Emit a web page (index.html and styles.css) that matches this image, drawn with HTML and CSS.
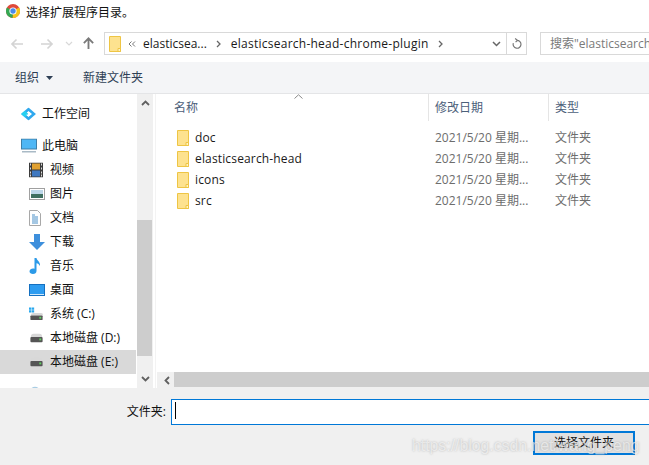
FILE: index.html
```html
<!DOCTYPE html>
<html lang="zh">
<head>
<meta charset="utf-8">
<title>选择扩展程序目录。</title>
<link rel="stylesheet" href="styles.css">
</head>
<body>
<div class="dialog">
  <header class="titlebar">
    <svg class="chrome" viewBox="0 0 14 14" width="14" height="14">
      <circle cx="7" cy="7" r="7" fill="#e0493a"/>
      <path d="M7 7 L13.1 3.6 A7 7 0 0 1 6.5 14 Z" fill="#f5c518"/>
      <path d="M7 7 L6.5 14 A7 7 0 0 1 1 3.4 Z" fill="#34a853"/>
      <circle cx="7" cy="7" r="3.6" fill="#fff"/>
      <circle cx="7" cy="7" r="2.7" fill="#4a8be8"/>
    </svg>
    <span class="title-text">选择扩展程序目录。</span>
  </header>

  <div class="navbar">
    <svg class="nav-ico back" viewBox="0 0 14 12" width="14" height="12"><path d="M13 6H2M6.500 1.500L2 6l4.500 4.500" fill="none" stroke="#d4d4d4" stroke-width="1.700"/></svg>
    <svg class="nav-ico fwd" viewBox="0 0 14 12" width="14" height="12"><path d="M1 6h11M7.500 1.500L12 6l-4.500 4.500" fill="none" stroke="#d4d4d4" stroke-width="1.700"/></svg>
    <svg class="nav-ico drop" viewBox="0 0 8 5" width="8" height="5"><path d="M1 1l3 3 3-3" fill="none" stroke="#d8d8d8" stroke-width="1.200"/></svg>
    <svg class="nav-ico up" viewBox="0 0 14 14" width="13" height="13"><path d="M7 13V2M2 6.500L7 1.500l5 5" fill="none" stroke="#7a7a7a" stroke-width="2"/></svg>
    <div class="address">
      <svg class="folder addr-folder" viewBox="0 0 12 16" width="12" height="16"><use href="#folder-shape"/></svg>
      <svg class="chev-l" viewBox="0 0 8 6" width="8" height="6"><path d="M3.500 .5L1 3l2.500 2.500M7 .5L4.500 3 7 5.500" fill="none" stroke="#777" stroke-width="1"/></svg>
      <span class="crumb">elasticsea...</span>
      <svg class="chev-r" viewBox="0 0 5 8" width="5" height="8"><path d="M1 1l3 3-3 3" fill="none" stroke="#666" stroke-width="1.300"/></svg>
      <span class="crumb crumb-long">elasticsearch-head-chrome-plugin</span>
      <svg class="chev-r" viewBox="0 0 5 8" width="5" height="8"><path d="M1 1l3 3-3 3" fill="none" stroke="#666" stroke-width="1.300"/></svg>
      <span class="grow"></span>
      <svg class="addr-drop" viewBox="0 0 9 6" width="9" height="6"><path d="M1 1l3.500 3.500L8 1" fill="none" stroke="#666" stroke-width="1.500"/></svg>
      <span class="refresh">
        <svg viewBox="0 0 12 13" width="11" height="12"><path d="M6.500 2.500A4.300 4.300 0 1 1 2.500 5.500M4.500 .5l2.500 2-2 2" fill="none" stroke="#777" stroke-width="1.300"/></svg>
      </span>
    </div>
    <div class="search">搜索"elasticsearch-head-chrome-plugin"</div>
  </div>

  <div class="toolbar">
    <span class="tool">组织</span>
    <svg class="caret" viewBox="0 0 7 4" width="7" height="4"><path d="M0 0h7L3.500 4z" fill="#2e3f55"/></svg>
    <span class="tool new-folder">新建文件夹</span>
  </div>

  <main class="main">
    <nav class="sidebar">
      <div class="tree-item top gap-after">
        <svg class="ico" viewBox="0 0 16 14" width="15" height="13"><path d="M8 0l8 7-8 7-8-7z" fill="#2fa8ee"/><path d="M8 4l3.500 3L8 10 4.500 7z" fill="#fff"/><path d="M0 7l4-3.500L8 7l-4 3.500z" fill="#27d0f0"/><path d="M5 7.500L8 10l3.500-3L8 4 6.500 5.300 8 6.700 6.500 8z" fill="#fff"/></svg>
        <span>工作空间</span>
      </div>
      <div class="tree-item top">
        <svg class="ico" viewBox="0 0 16 15" width="16" height="15"><rect x="0.500" y="0.500" width="15" height="10" fill="#4fb7f5" stroke="#3f7fa8"/><rect x="1" y="12.500" width="14" height="1.500" fill="#a9bac6"/></svg>
        <span>此电脑</span>
      </div>
      <div class="tree-item">
        <svg class="ico" viewBox="0 0 14 15" width="14" height="15"><rect width="14" height="15" fill="#3b3b3b"/><rect x="3" y="1" width="8" height="6" fill="#e0a030"/><rect x="3" y="8" width="8" height="6" fill="#3f78c0"/><path d="M1 1h1v2H1zM1 5h1v2H1zM1 9h1v2H1zM1 12h1v2H1zM12 1h1v2h-1zM12 5h1v2h-1zM12 9h1v2h-1zM12 12h1v2h-1z" fill="#ddd"/></svg>
        <span>视频</span>
      </div>
      <div class="tree-item">
        <svg class="ico" viewBox="0 0 16 12" width="16" height="12"><rect x="0.500" y="0.500" width="15" height="11" fill="#fff" stroke="#a0a0a0"/><rect x="2" y="2" width="12" height="4" fill="#bcd6e8"/><rect x="2" y="6" width="12" height="4" fill="#3f6f60"/></svg>
        <span>图片</span>
      </div>
      <div class="tree-item">
        <svg class="ico" viewBox="0 0 12 16" width="12" height="16"><path d="M.5.500h8l3 3v12H.5z" fill="#fff" stroke="#a8a8a8"/><path d="M3 5h3M3 7h6M3 9h6M3 11h6M3 13h6" stroke="#4a90c8"/></svg>
        <span>文档</span>
      </div>
      <div class="tree-item">
        <svg class="ico" viewBox="0 0 16 16" width="16" height="16"><path d="M5 0h6v8h5l-8 8-8-8h5z" fill="#3d8fdc"/></svg>
        <span>下载</span>
      </div>
      <div class="tree-item">
        <svg class="ico" viewBox="0 0 12 16" width="12" height="16"><path d="M5.500 0h2c.3 2.500 4 3.500 3.500 8-1-1.800-2-2.500-3.500-2.800V13c0 1.800-1.500 3-3.500 3S.500 15 .500 13.300 2.300 10.500 4 10.500c.6 0 1.100.1 1.500.3z" fill="#2b9ae8"/></svg>
        <span>音乐</span>
      </div>
      <div class="tree-item">
        <svg class="ico" viewBox="0 0 16 12" width="16" height="12"><rect x="0.500" y="0.500" width="15" height="11" fill="#2e9cf0" stroke="#1570c0"/><rect x="1" y="10" width="14" height="1" fill="#cfe8fb"/></svg>
        <span>桌面</span>
      </div>
      <div class="tree-item">
        <svg class="ico" viewBox="0 0 16 14" width="15" height="14"><path d="M0 0h2.500v2.500H0zM3 0h2.500v2.500H3zM0 3h2.500v2.500H0zM3 3h2.500v2.500H3z" fill="#28a8ee"/><path d="M2 8.500Q2 6 5 6h8q2 0 2 2.500z" fill="#d8d8d8"/><rect x="1.500" y="8.500" width="13" height="5" rx="1" fill="#555"/><rect x="11" y="10" width="2" height="2" fill="#5fd35f"/></svg>
        <span>系统 (C:)</span>
      </div>
      <div class="tree-item">
        <svg class="ico" viewBox="0 0 16 10" width="15" height="10"><use href="#disk-shape"/></svg>
        <span>本地磁盘 (D:)</span>
      </div>
      <div class="tree-item selected">
        <svg class="ico" viewBox="0 0 16 10" width="15" height="10"><use href="#disk-shape"/></svg>
        <span>本地磁盘 (E:)</span>
      </div>
      <div class="tree-item net">
        <svg class="ico" viewBox="0 0 16 16" width="12" height="12"><circle cx="8" cy="8" r="7" fill="#a9cde4"/></svg>
      </div>
    </nav>

    <div class="vscroll">
      <svg class="arrow" viewBox="0 0 9 6" width="9" height="6"><path d="M1 5l3.500-3.500L8 5" fill="none" stroke="#606060" stroke-width="1.800"/></svg>
      <div class="vtrack"><div class="vthumb"></div></div>
      <svg class="arrow" viewBox="0 0 9 6" width="9" height="6"><path d="M1 1l3.500 3.500L8 1" fill="none" stroke="#606060" stroke-width="1.800"/></svg>
    </div>

    <section class="files">
      <div class="list-head">
        <svg class="sort" viewBox="0 0 9 5" width="9" height="5"><path d="M.5 4.500L4.500 .8l4 3.700" fill="none" stroke="#8a8a8a"/></svg>
        <div class="col col-name">名称</div>
        <div class="col col-date">修改日期</div>
        <div class="col col-type">类型</div>
      </div>
      <div class="rows">
        <div class="row"><div class="cell-name"><svg class="folder" viewBox="0 0 12 16" width="12" height="16"><use href="#folder-shape"/></svg><span>doc</span></div><div class="cell-date">2021/5/20 星期...</div><div class="cell-type">文件夹</div></div>
        <div class="row"><div class="cell-name"><svg class="folder" viewBox="0 0 12 16" width="12" height="16"><use href="#folder-shape"/></svg><span>elasticsearch-head</span></div><div class="cell-date">2021/5/20 星期...</div><div class="cell-type">文件夹</div></div>
        <div class="row"><div class="cell-name"><svg class="folder" viewBox="0 0 12 16" width="12" height="16"><use href="#folder-shape"/></svg><span>icons</span></div><div class="cell-date">2021/5/20 星期...</div><div class="cell-type">文件夹</div></div>
        <div class="row"><div class="cell-name"><svg class="folder" viewBox="0 0 12 16" width="12" height="16"><use href="#folder-shape"/></svg><span>src</span></div><div class="cell-date">2021/5/20 星期...</div><div class="cell-type">文件夹</div></div>
      </div>
      <div class="hscroll">
        <svg class="harrow" viewBox="0 0 6 9" width="6" height="9"><path d="M5 1L1.500 4.500 5 8" fill="none" stroke="#606060" stroke-width="1.800"/></svg>
        <div class="hthumb"></div>
      </div>
    </section>
  </main>

  <footer class="bottom">
    <div class="field">
      <label class="field-label">文件夹:</label>
      <div class="field-input"><span class="cursor"></span></div>
    </div>
    <div class="actions">
      <button class="primary">选择文件夹</button>
    </div>
  </footer>
  <div class="watermark">https://blog.csdn.net/wang_peng</div>
</div>

<svg class="defs" width="0" height="0">
  <defs>
    <g id="folder-shape">
      <path d="M.5.500h11v15H.5z" fill="#fde28f" stroke="#eec544"/>
      <path d="M9 15.500v-3h2.500v3z" fill="#fff3c4" stroke="#eec544"/>
    </g>
    <g id="disk-shape">
      <path d="M2 4Q2 .5 5 .5h6Q14 .5 14 4z" fill="#d8d8d8"/>
      <rect x="1.500" y="4" width="13" height="5.500" rx="1" fill="#555"/>
      <rect x="11" y="5.500" width="2" height="2" fill="#5fd35f"/>
    </g>
  </defs>
</svg>
</body>
</html>
```
FILE: styles.css
```css
* { box-sizing: border-box; }
html, body { margin: 0; padding: 0; }
body {
  width: 649px;
  height: 465px;
  overflow: hidden;
  background: #fff;
  font: 12px/16px "Open Sans", "Noto Sans CJK SC", sans-serif;
  color: #1a1a1a;
}
.defs { position: absolute; }
.dialog { position: relative; width: 649px; height: 465px; display: flex; flex-direction: column; overflow: hidden; }

.titlebar { height: 32px; flex: none; display: flex; align-items: flex-start; padding: 4px 0 0 6px; gap: 6px; color: #111; }
.chrome { flex: none; }
.title-text { margin-top: 1px; }

.navbar { height: 30px; flex: none; display: flex; align-items: flex-start; position: relative; }
.nav-ico { flex: none; }
.back { margin: 6px 0 0 10px; }
.fwd { margin: 6px 0 0 16px; }
.drop { margin: 9px 0 0 11px; }
.up { margin: 5px 0 0 9px; }
.address {
  flex: none;
  width: 423px; height: 23px;
  margin-left: 9px;
  border: 1px solid #d9d9d9;
  display: flex; align-items: center;
  padding-left: 4px;
  color: #1a1a1a;
  white-space: nowrap;
}
.addr-folder { margin-right: 7px; }
.chev-l { margin-right: 7px; }
.crumb { flex: none; }
.chev-r { margin: 0 10px 0 9px; flex: none; }
.crumb-long { letter-spacing: .25px; }
.grow { flex: 1; }
.addr-drop { margin-right: 5px; flex: none; }
.refresh { flex: none; width: 20px; height: 21px; border-left: 1px solid #d9d9d9; display: flex; align-items: center; justify-content: center; }
.search {
  flex: none;
  width: 200px; height: 23px;
  margin-left: 13px;
  border: 1px solid #d9d9d9;
  padding: 3px 0 0 9px;
  color: #7a7a7a;
  white-space: nowrap;
  overflow: hidden;
}

.toolbar { height: 32px; flex: none; background: #f4f5f7; border-bottom: 1px solid #e4e5e7; display: flex; align-items: center; padding-left: 15px; color: #2e3f55; }
.caret { margin-left: 7px; flex: none; }
.new-folder { margin-left: 30px; }

.main { height: 294px; flex: none; display: flex; overflow: hidden; }
.sidebar { width: 137px; flex: none; overflow: hidden; padding-top: 8px; }
.tree-item { height: 24px; display: flex; align-items: center; padding-left: 50px; position: relative; white-space: nowrap; color: #111; }
.tree-item .ico { position: absolute; left: 29px; top: 50%; transform: translateY(-50%); }
.tree-item.top { padding-left: 42px; }
.tree-item.top .ico { left: 21px; }
.tree-item.net .ico { transform: none; top: 12px; }
.gap-after { margin-bottom: 8px; }
.selected { background: #d9d9d9; margin-right: 1px; }

.vscroll { width: 16px; flex: none; background: #f0f0f0; display: flex; flex-direction: column; align-items: center; }
.arrow { flex: none; margin: 6px 0; }
.vtrack { flex: 1; width: 100%; padding-top: 108px; padding-bottom: 8px; }
.vthumb { height: 136px; width: 15px; background: #cdcdcd; }

.files { flex: 1; margin-left: 2px; border-left: 1px solid #f3f3f3; padding-left: 1px; display: flex; flex-direction: column; position: relative; min-width: 0; }
.list-head { height: 27px; flex: none; display: flex; color: #4c607a; position: relative; }
.sort { position: absolute; left: 137px; top: 0; }
.col { padding-top: 6px; border-right: 1px solid #e5e5e5; }
.col-name { width: 272px; padding-left: 17px; }
.col-date { width: 120px; padding-left: 6px; }
.col-type { flex: 1; padding-left: 6px; border-right: 0; }

.rows { flex: 1; padding-top: 6px; }
.row { height: 21px; display: flex; align-items: center; white-space: nowrap; }
.cell-name { width: 273px; padding-left: 20px; display: flex; align-items: center; gap: 6px; color: #1a1a1a; letter-spacing: .15px; }
.cell-date { width: 120px; padding-left: 5px; color: #6d6d6d; }
.cell-type { padding-left: 5px; color: #6d6d6d; }

.hscroll { height: 16px; flex: none; background: #f0f0f0; display: flex; align-items: center; }
.harrow { flex: none; margin: 0 4px 0 7px; }
.hthumb { flex: 1; height: 15px; background: #cdcdcd; align-self: flex-start; }

.bottom { flex: 1; background: #f0f0f0; display: flex; flex-direction: column; padding-top: 11px; }
.field { display: flex; align-items: center; height: 26px; }
.field-label { width: 171px; text-align: right; padding-right: 5px; color: #111; flex: none; }
.field-input { flex: 1; height: 26px; background: #fff; border: 1px solid #0078d7; border-right-width: 0; padding: 2px 0 0 3px; }
.cursor { display: block; width: 1px; height: 17px; background: #000; }
.actions { display: flex; justify-content: flex-end; padding: 6px 14px 0 0; }
.primary {
  width: 102px; height: 24px;
  background: #e1e1e1;
  border: 2px solid #0078d7;
  font: inherit;
  color: #111;
  padding: 0;
}
.watermark {
  position: absolute; left: 412px; top: 436px;
  font: 15.800px/20px "Liberation Sans", sans-serif;
  color: rgba(255,255,255,.6);
  text-shadow: 0 0 2px rgba(120,120,120,.5);
  white-space: nowrap;
}
```
